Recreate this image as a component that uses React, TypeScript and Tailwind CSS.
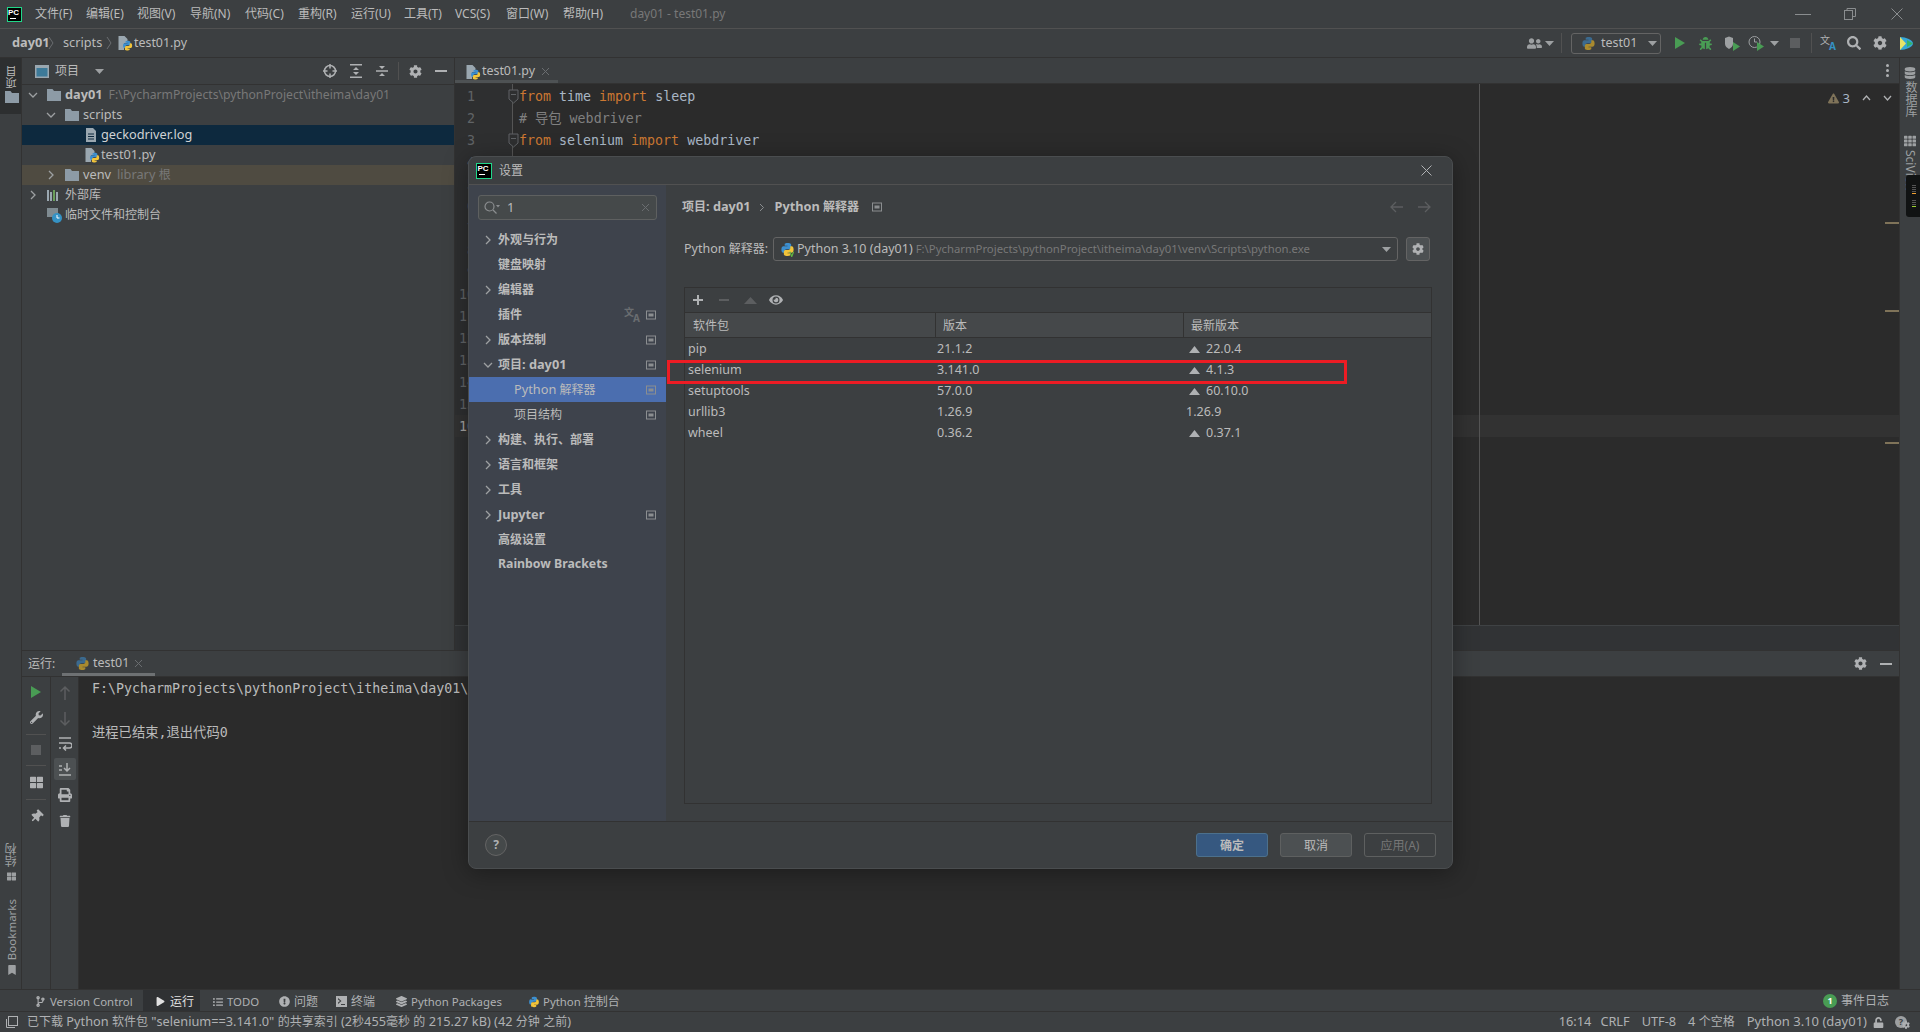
import React from 'react';
import { FaCog, FaWrench, FaPrint, FaTrash, FaThumbtack, FaEye, FaSearch, FaBug, FaDatabase, FaUnlock, FaBookmark, FaLayerGroup, FaExclamationCircle, FaCodeBranch, FaPlay, FaUserFriends, FaListUl, FaTh, FaThLarge, FaExclamationTriangle } from 'react-icons/fa';

const Mix = ({ s }: { s: string }) => (
  <>
    {s.split(/([\u4e00-\u9fff、]+)/).map((p, i) =>
      i % 2 === 1 ? <span key={i} className="text-[12px]">{p}</span> : <span key={i}>{p}</span>
    )}
  </>
);

const PcLogo = ({ small }: { small?: boolean }) => (
  <div className={`${small ? 'w-[15px] h-[15px]' : 'w-[16px] h-[16px]'} bg-black border border-[#21d789] flex flex-col items-center justify-start overflow-hidden shrink-0`}>
    <span className="text-[8px] leading-[9px] font-bold text-white font-['Liberation_Sans',sans-serif] -ml-[2px]">PC</span>
    <span className="block w-[6px] h-[1px] bg-white -ml-[4px] mt-[1px]" />
  </div>
);

const PY_PATH = 'M7.9 1C4.9 1 5 2.3 5 2.3V4h3v.5H3.8S1.5 4.3 1.5 7.9s2 3.5 2 3.5H5V9.6s-.1-2 2-2h3s1.9 0 1.9-1.8V2.9S12.2 1 7.9 1z';

const PyLogo = ({ size = 14, dim, venv }: { size?: number; dim?: boolean; venv?: boolean }) => (
  <svg width={size} height={size} viewBox="0 0 16 16" className="shrink-0">
    <path fill={dim ? '#3b6a8f' : '#3c8fd0'} d={PY_PATH} />
    <path fill={dim ? '#a98a2e' : '#f2c43a'} transform="rotate(180 8 8)" d={PY_PATH} />
    {venv && <path d="M10.500 10.500l2 5 2-5" fill="none" stroke="#62b543" strokeWidth="1.300" />}
  </svg>
);

const PyFile = () => (
  <svg width="16" height="16" viewBox="0 0 16 16" className="shrink-0">
    <path fill="#9aa7b0" d="M1.500 1h6l3 3v4H7v7H1.500z" />
    <g transform="translate(5 5) scale(.7)">
      <path fill="#3c8fd0" d={PY_PATH} />
      <path fill="#f2c43a" transform="rotate(180 8 8)" d={PY_PATH} />
    </g>
  </svg>
);

const Chevron = ({ open, className = '' }: { open?: boolean; className?: string }) => (
  <svg width="12" height="12" viewBox="0 0 12 12" className={`shrink-0 ${className}`} fill="none" stroke="#9da0a2" strokeWidth="1.300">
    {open ? <path d="M2 4l4 4 4-4" /> : <path d="M4 2l4 4-4 4" />}
  </svg>
);

const Folder = () => (
  <svg width="14" height="12" viewBox="0 0 14 12" className="shrink-0"><path fill="#8d9ba6" d="M0 0h5.500l1.500 2h7v10H0z" /></svg>
);

const Caret = ({ c = '#9da0a2' }: { c?: string }) => (
  <svg width="9" height="5" viewBox="0 0 9 5" className="shrink-0"><path d="M0 0h9L4.500 5z" fill={c} /></svg>
);

const Translate = ({ dim }: { dim?: boolean }) => (
  <span className={`relative block w-[16px] h-[16px] text-[10px] leading-[10px] ${dim ? 'text-[#6a6d70]' : 'text-[#afb1b3]'}`}>
    <span className="absolute left-0 top-0">文</span>
    <span className={`absolute right-0 bottom-0 font-bold ${dim ? 'text-[#6a6d70]' : 'text-[#3592c4]'}`}>A</span>
  </span>
);

const menus: [string, string][] = [['文件(F)', 'w-[51px]'], ['编辑(E)', 'w-[51px]'], ['视图(V)', 'w-[53px]'], ['导航(N)', 'w-[55px]'], ['代码(C)', 'w-[53px]'], ['重构(R)', 'w-[53px]'], ['运行(U)', 'w-[53px]'], ['工具(T)', 'w-[51px]'], ['VCS(S)', 'w-[51px]'], ['窗口(W)', 'w-[57px]'], ['帮助(H)', 'w-[67px]']];

function TitleBar() {
  return (
    <div className="h-[29px] shrink-0 flex items-center border-b border-[#515151] pl-[7px] text-[12px] text-[#bbbbbb]">
      <PcLogo small />
      <div className="w-[13px]" />
      {menus.map(([m, w]) => <span key={m} className={`${w} shrink-0`}>{m}</span>)}
      <span className="text-[#787878]">day01 - test01.py</span>
      <div className="flex-1" />
      <div className="w-[16px] h-[1px] bg-[#8a8d8f] mr-[33px]" />
      <svg width="12" height="12" viewBox="0 0 12 12" fill="none" stroke="#8a8d8f" className="mr-[35px]"><rect x=".5" y="2.500" width="8" height="9" /><path d="M3 2.500V.5h8.500v8H8.500" /></svg>
      <svg width="12" height="12" viewBox="0 0 12 12" fill="none" stroke="#8a8d8f" className="mr-[17px]"><path d="M.5.5l11 11M11.500.5l-11 11" /></svg>
    </div>
  );
}

function NavBar() {
  return (
    <div className="h-[29px] shrink-0 flex items-center border-b border-[#323232] pl-[12px] text-[12.750px] text-[#bbbbbb]">
      <span className="font-bold w-[36px]">day01</span>
      <svg width="6" height="14" viewBox="0 0 6 14" fill="none" stroke="#6a6d70" className="mr-[9px]"><path d="M1 1l4 6-4 6" /></svg>
      <span className="w-[43px]">scripts</span>
      <svg width="6" height="14" viewBox="0 0 6 14" fill="none" stroke="#6a6d70" className="mr-[5px]"><path d="M1 1l4 6-4 6" /></svg>
      <PyFile />
      <span className="ml-[1px] text-[12.400px]">test01.py</span>
      <div className="flex-1" />
      <FaUserFriends className="text-[#9da0a2] text-[15px] mr-[3px]" />
      <Caret />
      <div className="w-[1px] h-[20px] bg-[#515151] ml-[7px] mr-[9px]" />
      <div className="w-[90px] h-[21px] border border-[#646464] rounded-[3px] flex items-center pl-[9px] mr-[13px]">
        <PyLogo size={15} dim />
        <span className="ml-[5px] w-[47px] text-[12.500px]">test01</span>
        <Caret />
      </div>
      <svg width="12" height="14" viewBox="0 0 12 14" className="mr-[13px]"><path d="M1 1l10 6-10 6z" fill="#499c54" /></svg>
      <FaBug className="text-[#499c54] text-[13px] mr-[12px]" />
      <svg width="17" height="16" viewBox="0 0 17 16" className="mr-[7px]"><path d="M1 3l4-1.500L9 3v6c0 2-2 4-4 5-2-1-4-3-4-5z" fill="#9da0a2" /><path d="M9 7l7 4.500L9 16z" fill="#499c54" /></svg>
      <svg width="17" height="16" viewBox="0 0 17 16" fill="none" className="mr-[5px]"><circle cx="6.500" cy="7" r="5.500" stroke="#9da0a2" /><path d="M6.500 3.500V7H9" stroke="#9da0a2" /><path d="M9 7l7 4.500L9 16z" fill="#499c54" /></svg>
      <Caret />
      <div className="w-[10px] h-[10px] bg-[#5c5e60] ml-[11px] mr-[11px]" />
      <div className="w-[1px] h-[20px] bg-[#515151] mr-[8px]" />
      <Translate />
      <FaSearch className="text-[#afb1b3] text-[14px] ml-[11px]" />
      <FaCog className="text-[#afb1b3] text-[14px] ml-[12px]" />
      <svg width="15" height="15" viewBox="0 0 15 15" className="ml-[12px] mr-[6px]"><path d="M1 1c6 0 13 3 13 6.500S7 14 1 14z" fill="#35a8d8" /><path d="M1 1l6 6.500L1 14z" fill="#e8e36a" /><path d="M8 4l6 3.500-6 3.500z" fill="#35b36b" /></svg>
    </div>
  );
}

function LeftStripe() {
  return (
    <div className="w-[22px] shrink-0 flex flex-col border-r border-[#323232] text-[#bbbbbb]">
      <div className="h-[56px] bg-[#2d2f30] flex flex-col items-center pt-[8px] pl-[2px] gap-[3px]">
        <span className="[writing-mode:vertical-rl] rotate-180 text-[11px] leading-[12px]">项目</span>
        <Folder />
      </div>
      <div className="flex-1" />
      <div className="flex flex-col items-center gap-[5px] text-[#9da0a2] mb-[14px] pl-[2px]">
        <span className="[writing-mode:vertical-rl] rotate-180 text-[12px] leading-[12px]">结构</span>
        <FaThLarge className="text-[9px] mb-[13px]" />
        <span className="[writing-mode:vertical-rl] rotate-180 text-[11.500px] leading-[12px]">Bookmarks</span>
        <FaBookmark className="text-[10px]" />
      </div>
    </div>
  );
}

const Row = ({ indent, chev, open, icon, children, cls = '' }: { indent: string; chev?: boolean; open?: boolean; icon: React.ReactNode; children: React.ReactNode; cls?: string }) => (
  <div className={`h-[20px] flex items-center text-[12.750px] text-[#bbbbbb] ${indent} ${cls}`}>
    <span className="w-[20px] shrink-0 flex items-center">{chev && <Chevron open={open} />}</span>
    <span className="w-[18px] shrink-0 flex items-center">{icon}</span>
    {children}
  </div>
);

function ProjectPanel() {
  return (
    <div className="w-[433px] shrink-0 flex flex-col border-r border-[#323232]">
      <div className="h-[27px] shrink-0 flex items-center border-b border-[#323232] pl-[13px] text-[12px] text-[#bbbbbb]">
        <svg width="14" height="13" viewBox="0 0 14 13" className="shrink-0"><rect width="14" height="13" fill="#9aa7b0" /><rect x="1.500" y="3" width="11" height="8.500" fill="#3d7a99" /></svg>
        <span className="ml-[6px] w-[40px]">项目</span>
        <Caret />
        <div className="flex-1" />
        <svg width="14" height="14" viewBox="0 0 14 14" fill="none" stroke="#afb1b3" strokeWidth="1.500" className="mr-[12px]"><circle cx="7" cy="7" r="5.500" /><path d="M7 0v4.500M7 9.500V14M0 7h4.500M9.500 7H14" /></svg>
        <svg width="14" height="14" viewBox="0 0 14 14" fill="#afb1b3" className="mr-[12px]"><path d="M1 0h12v1.500H1zM1 12.500h12V14H1zM7 3l3 3H4zM7 11L4 8h6z" /></svg>
        <svg width="14" height="14" viewBox="0 0 14 14" fill="#afb1b3" className="mr-[9px]"><path d="M1 6.250h12v1.500H1zM7 5L4 2h6zM7 9l3 3H4z" /></svg>
        <div className="w-[1px] h-[18px] bg-[#515151] mr-[10px]" />
        <FaCog className="text-[#afb1b3] text-[13px] mr-[13px]" />
        <div className="w-[12px] h-[2px] bg-[#afb1b3] mr-[7px]" />
      </div>
      <div className="flex flex-col">
        <Row indent="pl-[5px]" chev open icon={<Folder />}><span className="font-bold">day01</span><span className="ml-[6px] text-[#787878] text-[12.200px]">F:\PycharmProjects\pythonProject\itheima\day01</span></Row>
        <Row indent="pl-[23px]" chev open icon={<Folder />}>scripts</Row>
        <Row indent="pl-[41px]" cls="bg-[#0d293e]" icon={<svg width="12" height="14" viewBox="0 0 12 14" className="ml-[2px]"><path fill="#9aa7b0" d="M1 0h7l3 3v11H1z" /><path stroke="#0d293e" d="M3 6h6M3 8.500h6M3 11h6" /></svg>}><span className="text-[#d0d2d4]">geckodriver.log</span></Row>
        <Row indent="pl-[41px]" icon={<span className="ml-[1px] flex"><PyFile /></span>}>test01.py</Row>
        <Row indent="pl-[23px]" cls="bg-[#4f4b41]" chev icon={<Folder />}>venv<span className="ml-[6px] text-[#787878]"><Mix s="library 根" /></span></Row>
        <Row indent="pl-[5px]" chev icon={<svg width="13" height="13" viewBox="0 0 13 13"><path fill="#9aa7b0" d="M0 1h2v11H0zM3 3h2v9H3z" /><path fill="#6a9e5b" d="M6 1h2v11H6z" /><path fill="#9aa7b0" d="M9 3h2v9H9z" /></svg>}><Mix s="外部库" /></Row>
        <Row indent="pl-[5px]" icon={<svg width="15" height="15" viewBox="0 0 15 15"><rect x="0" y="0" width="11" height="9" fill="#7f8b91" /><circle cx="10" cy="10" r="5" fill="#3592c4" /><path d="M10 7v3h2.500" stroke="#fff" fill="none" /></svg>}><Mix s="临时文件和控制台" /></Row>
      </div>
    </div>
  );
}

const Fold = ({ top }: { top: string }) => (
  <svg width="11" height="15" viewBox="0 0 11 15" fill="#2e2f30" stroke="#606366" className={`absolute left-[53px] ${top}`}><path d="M1 1h9v9l-4.500 4L1 10zM3 5.500h5" /></svg>
);

function Editor() {
  const nums = [1, 2, 3, 4, 5, 6, 7, 8, 9, 10, 11, 12, 13, 14, 15, 16];
  const K = ({ children }: { children: React.ReactNode }) => <span className="text-[#cc7832]">{children}</span>;
  return (
    <div className="flex-1 min-w-0 flex flex-col">
      <div className="h-[26px] shrink-0 flex items-stretch border-b border-[#323232] text-[12.400px] text-[#bbbbbb]">
        <div className="w-[103px] flex items-center pl-[10px] border-b-[3px] border-[#4e5254] pt-[5px]">
          <PyFile />
          <span className="ml-[1px]">test01.py</span>
          <svg width="9" height="9" viewBox="0 0 9 9" stroke="#6a6d70" className="ml-[6px]"><path d="M1 1l7 7M8 1l-7 7" /></svg>
        </div>
        <div className="flex-1" />
        <div className="flex flex-col gap-[2px] justify-center mr-[10px]">
          <i className="block w-[3px] h-[3px] rounded-full bg-[#afb1b3]" />
          <i className="block w-[3px] h-[3px] rounded-full bg-[#afb1b3]" />
          <i className="block w-[3px] h-[3px] rounded-full bg-[#afb1b3]" />
        </div>
      </div>
      <div className="flex-1 min-h-0 flex bg-[#2b2b2b] font-['DejaVu_Sans_Mono','Noto_Sans_CJK_SC',monospace] text-[13.300px] leading-[22px] relative overflow-hidden">
        <div className="w-[58px] shrink-0 bg-[#2e2f30] border-r border-[#555555] pt-[2px]">
          {nums.map((n) => <div key={n} className={`h-[22px] w-[20px] text-right ${n === 16 ? 'text-[#a4a3a3]' : 'text-[#606366]'}`}>{n}</div>)}
        </div>
        <div className="flex-1 pt-[2px] pl-[6px] text-[#a9b7c6]">
          <div className="h-[22px]"><K>from</K> time <K>import</K> sleep</div>
          <div className="h-[22px] text-[#808080]"># 导包 webdriver</div>
          <div className="h-[22px]"><K>from</K> selenium <K>import</K> webdriver</div>
        </div>
        <Fold top="top-[5px]" />
        <Fold top="top-[49px]" />
        <div className="absolute left-0 right-0 top-[331px] h-[22px] bg-[#323232]" />
        <div className="absolute left-0 top-[332px] w-[20px] h-[22px] text-right text-[#a4a3a3]">16</div>
        <div className="absolute left-[1024px] top-0 bottom-0 w-[1px] bg-[#555555]" />
        <div className="absolute right-0 top-[138px] w-[14px] h-[2px] bg-[#7f7359]" />
        <div className="absolute right-0 top-[226px] w-[14px] h-[2px] bg-[#7f7359]" />
        <div className="absolute right-0 top-[358px] w-[14px] h-[2px] bg-[#7f7359]" />
        <div className="absolute right-[7px] top-[3px] flex items-center font-['Noto_Sans',sans-serif] text-[13px] text-[#a9b7c6]">
          <FaExclamationTriangle className="text-[#7f7359] text-[11px] mr-[4px]" />
          <span className="mr-[12px]">3</span>
          <svg width="9" height="6" viewBox="0 0 9 6" fill="none" stroke="#afb1b3" strokeWidth="1.300" className="mr-[12px]"><path d="M1 5l3.500-4L8 5" /></svg>
          <svg width="9" height="6" viewBox="0 0 9 6" fill="none" stroke="#afb1b3" strokeWidth="1.300"><path d="M1 1l3.500 4L8 1" /></svg>
        </div>
      </div>
      <div className="h-[25px] shrink-0 bg-[#313335] border-t border-[#3f4244]" />
    </div>
  );
}

function RunPanel() {
  const c = 'text-[#afb1b3]';
  const Sep = () => <div className="w-[20px] h-[1px] bg-[#515151]" />;
  return (
    <div className="h-[339px] shrink-0 flex flex-col border-t border-[#323232]">
      <div className="h-[26px] shrink-0 flex items-stretch border-b border-[#323232] text-[12.500px] text-[#bbbbbb]">
        <span className="ml-[6px] w-[34px] self-center text-[12px]">运行:</span>
        <div className="w-[93px] flex items-center pl-[13px] border-b-[3px] border-[#6e7173] pt-[2px]">
          <PyLogo size={15} dim />
          <span className="ml-[3px]">test01</span>
          <svg width="9" height="9" viewBox="0 0 9 9" stroke="#6a6d70" className="ml-[5px]"><path d="M1 1l7 7M8 1l-7 7" /></svg>
        </div>
        <div className="flex-1" />
        <FaCog className="text-[#afb1b3] text-[13px] self-center mr-[13px]" />
        <div className="w-[12px] h-[2px] bg-[#afb1b3] self-center mr-[7px]" />
      </div>
      <div className="flex-1 min-h-0 flex">
        <div className={`w-[29px] shrink-0 border-r border-[#323232] flex flex-col items-center pt-[8px] gap-[10px] ${c}`}>
          <svg width="12" height="14" viewBox="0 0 12 14"><path d="M1 1l10 6-10 6z" fill="#499c54" /></svg>
          <FaWrench className="text-[13px] mt-[2px]" />
          <Sep />
          <div className="w-[10px] h-[10px] bg-[#5c5e60]" />
          <Sep />
          <FaThLarge className="text-[13px]" />
          <Sep />
          <FaThumbtack className="text-[13px] rotate-45" />
        </div>
        <div className={`w-[28px] shrink-0 flex flex-col items-center pt-[8px] gap-[10px] border-r border-[#323232] ${c}`}>
          <svg width="12" height="16" viewBox="0 0 12 16" fill="none" stroke="#5c5e60" strokeWidth="1.500"><path d="M6 15V2M1.500 6.500L6 2l4.500 4.500" /></svg>
          <svg width="12" height="16" viewBox="0 0 12 16" fill="none" stroke="#5c5e60" strokeWidth="1.500"><path d="M6 1v13M1.500 9.500L6 14l4.500-4.500" /></svg>
          <svg width="14" height="14" viewBox="0 0 14 14" fill="none" stroke="#afb1b3" strokeWidth="1.500"><path d="M1 1h12M1 6h10.500a2.200 2.200 0 010 5H6M1 11h2M8 8.500L5.500 11 8 13.500" /></svg>
          <div className="w-[22px] h-[22px] -my-[3px] bg-[#4c5052] rounded-[2px] flex items-center justify-center">
            <svg width="14" height="14" viewBox="0 0 14 14" fill="none" stroke="#afb1b3" strokeWidth="1.500"><path d="M1 13h12M1 4h3M1 8h3M9 1v8M6 6l3 3 3-3" /></svg>
          </div>
          <FaPrint className="text-[14px] mt-[1px]" />
          <FaTrash className="text-[12px] mt-[3px]" />
        </div>
        <div className="flex-1 bg-[#2b2b2b] pl-[13px] pt-[1px] font-['DejaVu_Sans_Mono','Noto_Sans_CJK_SC',monospace] text-[13.300px] leading-[22px] text-[#bbbbbb] whitespace-pre">
          <div>F:\PycharmProjects\pythonProject\itheima\day01\venv\Scripts\python.exe</div>
          <div className="h-[22px]" />
          <div>进程已结束,退出代码0</div>
        </div>
      </div>
    </div>
  );
}

function RightStripe() {
  return (
    <div className="w-[21px] shrink-0 border-l border-[#323232] flex flex-col items-center pt-[9px] text-[#9da0a2] relative">
      <FaDatabase className="text-[12px]" />
      <span className="[writing-mode:vertical-rl] text-[12px] leading-[12px] mt-[2px]">数据库</span>
      <FaTh className="text-[12px] mt-[18px]" />
      <span className="[writing-mode:vertical-rl] text-[12px] leading-[12px] mt-[3px]">SciView</span>
      <div className="absolute right-0 top-[117px] w-[14px] h-[42px] bg-[#111313] rounded-l-[3px] flex flex-col items-center justify-center gap-[1px] pl-[1px]">
        <span className="w-[4px] h-[1px] bg-[#555]" /><span className="w-[4px] h-[1px] bg-[#555]" /><span className="w-[4px] h-[1px] bg-[#555]" /><span className="w-[4px] h-[1px] bg-[#555]" />
        <span className="w-[4px] h-[1px] bg-[#f0a030] mb-[5px]" />
        <span className="w-[4px] h-[1px] bg-[#555]" /><span className="w-[4px] h-[1px] bg-[#555]" /><span className="w-[4px] h-[1px] bg-[#555]" />
        <span className="w-[4px] h-[1px] bg-[#9ad030]" />
      </div>
    </div>
  );
}

const bottomTabs = [
  { ic: <FaCodeBranch className="text-[11px]" />, t: 'Version Control', w: 'w-[143px] pl-[35px]' },
  { ic: <FaPlay className="text-[9px]" />, t: '运行', w: 'w-[57px] pl-[12px] bg-[#2f3133] text-[#e0e0e0]' },
  { ic: <FaListUl className="text-[10px]" />, t: 'TODO', w: 'w-[67px] pl-[12px]' },
  { ic: <FaExclamationCircle className="text-[11px]" />, t: '问题', w: 'w-[57px] pl-[12px]' },
  { ic: <svg width="11" height="11" viewBox="0 0 11 11"><path fill="#afb1b3" fillRule="evenodd" d="M0 0h11v11H0zM2 2v1.500L4 5 2 6.500V8l3.500-3zM5 8v1h4V8z" /></svg>, t: '终端', w: 'w-[60px] pl-[12px]' },
  { ic: <FaLayerGroup className="text-[11px]" />, t: 'Python Packages', w: 'w-[132px] pl-[12px]' },
  { ic: <PyLogo size={12} />, t: 'Python 控制台', w: 'pl-[12px]' },
];

function BottomBar() {
  return (
    <>
      <div className="h-[22px] shrink-0 flex items-stretch border-t border-[#323232] text-[11.400px] text-[#afb1b3]">
        {bottomTabs.map((b) => (
          <div key={b.t} className={`flex items-center pt-[2px] gap-[4px] shrink-0 whitespace-nowrap ${b.w}`}>
            <span className="w-[11px] flex justify-center">{b.ic}</span><span><Mix s={b.t} /></span>
          </div>
        ))}
        <div className="flex-1" />
        <div className="flex items-center pt-[1px] gap-[4px] mr-[31px] text-[12px]">
          <span className="w-[14px] h-[14px] rounded-full bg-[#499c54] text-white text-[9px] font-bold flex items-center justify-center">1</span>
          <span>事件日志</span>
        </div>
      </div>
      <div className="h-[21px] shrink-0 flex items-center border-t border-[#323232] text-[12.750px] text-[#afb1b3] pl-[6px] whitespace-nowrap">
        <svg width="12" height="12" viewBox="0 0 12 12" fill="none" stroke="#afb1b3"><rect x="2.500" y=".5" width="9" height="9" /><path d="M.5 3v8.500H9" /></svg>
        <span className="ml-[9px]"><Mix s={'已下载 Python 软件包 "selenium==3.141.0" 的共享索引 (2秒455毫秒 的 215.27 kB) (42 分钟 之前)'} /></span>
        <div className="flex-1" />
        <span className="mr-[9px]">16:14</span>
        <span className="mr-[12px]">CRLF</span>
        <span className="mr-[12px]">UTF-8</span>
        <span className="mr-[12px]"><Mix s="4 个空格" /></span>
        <span className="mr-[6px] text-[13px]"><Mix s="Python 3.10 (day01)" /></span>
        <FaUnlock className="text-[11px] mr-[11px]" />
        <span className="relative block w-[15px] h-[13px] mr-[10px]">
          <span className="absolute left-0 top-0 w-[12px] h-[12px] rounded-full bg-[#9da0a2] text-[#3c3f41] text-[9px] leading-[12px] text-center font-bold">?</span>
          <FaCog className="absolute right-0 bottom-0 text-[8px] text-[#afb1b3]" />
        </span>
      </div>
    </>
  );
}

const Badge = () => (
  <svg width="10" height="10" viewBox="0 0 10 10" className="shrink-0"><rect x=".5" y="1" width="9" height="8" fill="none" stroke="#8b8e90" /><rect x="2.500" y="3.500" width="5" height="3" fill="#8b8e90" /></svg>
);

const side = [
  { t: '外观与行为', c: true },
  { t: '键盘映射' },
  { t: '编辑器', c: true },
  { t: '插件', b: true, tr: true },
  { t: '版本控制', c: true, b: true },
  { t: '项目: day01', c: true, o: true, b: true },
  { t: 'Python 解释器', sub: true, b: true, sel: true },
  { t: '项目结构', sub: true, b: true },
  { t: '构建、执行、部署', c: true },
  { t: '语言和框架', c: true },
  { t: '工具', c: true },
  { t: 'Jupyter', c: true, b: true },
  { t: '高级设置' },
  { t: 'Rainbow Brackets', small: true },
];

function Sidebar() {
  return (
    <div className="w-[197px] shrink-0 bg-[#3e434c] pt-[10px] flex flex-col">
      <div className="mx-[9px] h-[25px] rounded-[3px] border border-[#5e6060] bg-[#45494a] flex items-center pl-[5px] pr-[6px] text-[13px] text-[#bbbbbb]">
        <svg width="16" height="14" viewBox="0 0 16 14" fill="none" stroke="#8b8e90" strokeWidth="1.200"><circle cx="5.500" cy="5.500" r="4.500" /><path d="M9 9l3.500 3.500" /><path d="M12 4h4l-2 2.500z" fill="#8b8e90" stroke="none" /></svg>
        <span className="ml-[7px] flex-1">1</span>
        <svg width="9" height="9" viewBox="0 0 9 9" stroke="#6a6d70"><path d="M1 1l7 7M8 1l-7 7" /></svg>
      </div>
      <div className="mt-[7px] flex flex-col">
        {side.map((s) => (
          <div key={s.t} className={`h-[25px] flex items-center ${s.small ? 'text-[12.300px]' : 'text-[12.750px]'} text-[#bbbbbb] ${s.sel ? 'bg-[#4b6eaf]' : ''} ${s.sub ? 'pl-[45px]' : 'pl-[13px] font-bold'}`}>
            {!s.sub && <span className="w-[16px] shrink-0 flex items-center">{s.c && <Chevron open={s.o} />}</span>}
            <span className="flex-1 whitespace-nowrap"><Mix s={s.t} /></span>
            {s.tr && <span className="mr-[6px]"><Translate dim /></span>}
            {s.b && <span className="mr-[10px] flex"><Badge /></span>}
          </div>
        ))}
      </div>
    </div>
  );
}

const pkgs = [
  ['pip', '21.1.2', '22.0.4', true],
  ['selenium', '3.141.0', '4.1.3', true],
  ['setuptools', '57.0.0', '60.10.0', true],
  ['urllib3', '1.26.9', '1.26.9', false],
  ['wheel', '0.36.2', '0.37.1', true],
] as const;

function Content() {
  return (
    <div className="flex-1 min-w-0 flex flex-col pl-[18px] pr-[20px] pt-[11px]">
      <div className="h-[22px] flex items-center -ml-[2px] text-[12.750px] text-[#bbbbbb] font-bold">
        <span><Mix s="项目: day01" /></span>
        <svg width="6" height="9" viewBox="0 0 6 9" fill="none" stroke="#8b8e90" className="mx-[9px]"><path d="M1 1l3.500 3.500L1 8" /></svg>
        <span><Mix s="Python 解释器" /></span>
        <span className="ml-[13px] flex"><Badge /></span>
      </div>
      <div className="absolute right-[21px] top-[16px] flex items-center gap-[13px]">
        <svg width="14" height="12" viewBox="0 0 14 12" fill="none" stroke="#5c5e60" strokeWidth="1.300"><path d="M13 6H1M6 1L1 6l5 5" /></svg>
        <svg width="14" height="12" viewBox="0 0 14 12" fill="none" stroke="#5c5e60" strokeWidth="1.300"><path d="M1 6h12M8 1l5 5-5 5" /></svg>
      </div>
      <div className="h-[24px] mt-[19px] flex items-center text-[12.500px] text-[#bbbbbb]">
        <span className="w-[89px] shrink-0"><Mix s="Python 解释器:" /></span>
        <div className="w-[625px] h-[24px] border border-[#646464] rounded-[3px] flex items-center pl-[6px] pr-[6px] bg-[#3c3f41]">
          <PyLogo size={15} venv />
          <span className="ml-[2px] whitespace-nowrap">Python 3.10 (day01)</span>
          <span className="ml-[3px] text-[#787878] text-[11.350px] whitespace-nowrap">F:\PycharmProjects\pythonProject\itheima\day01\venv\Scripts\python.exe</span>
          <div className="flex-1" />
          <Caret />
        </div>
        <div className="w-[24px] h-[24px] ml-[8px] border border-[#646464] rounded-[3px] bg-[#4c5052] flex items-center justify-center"><FaCog className="text-[#afb1b3] text-[12px]" /></div>
      </div>
      <div className="mt-[26px] h-[517px] border border-[#323232] flex flex-col">
        <div className="h-[25px] shrink-0 flex items-center border-b border-[#323232]">
          <span className="w-[26px] flex justify-center"><svg width="12" height="12" viewBox="0 0 12 12" fill="#afb1b3"><path d="M5 1h2v4h4v2H7v4H5V7H1V5h4z" /></svg></span>
          <span className="w-[26px] flex justify-center"><i className="block w-[10px] h-[2px] bg-[#5c5e60]" /></span>
          <span className="w-[26px] flex justify-center"><svg width="13" height="7" viewBox="0 0 13 7"><path d="M6.500 0L13 7H0z" fill="#5c5e60" /></svg></span>
          <span className="w-[26px] flex justify-center"><FaEye className="text-[#afb1b3] text-[14px]" /></span>
        </div>
        <div className="h-[25px] shrink-0 grid grid-cols-[251px_248px_1fr] bg-[#45484a] border-b border-[#323232] text-[12px] text-[#bbbbbb]">
          <span className="flex items-center pl-[8px] pt-[1px] border-r border-[#323232]">软件包</span>
          <span className="flex items-center pl-[7px] pt-[1px] border-r border-[#323232]">版本</span>
          <span className="flex items-center pl-[7px] pt-[1px]">最新版本</span>
        </div>
        <div className="pt-[1px]">
          {pkgs.map(([n, v, l, up]) => (
            <div key={n} className="h-[21px] grid grid-cols-[251px_248px_1fr] items-center text-[12.500px] text-[#bbbbbb]">
              <span className="pl-[3px]">{n}</span>
              <span className="pl-[1px]">{v}</span>
              <span className={`flex items-center ${up ? 'pl-[5px]' : 'pl-[2px]'}`}>
                {up && <svg width="11" height="7" viewBox="0 0 11 7" className="mr-[6px]"><path d="M5.500 0L11 7H0z" fill="#afb1b3" /></svg>}
                {l}
              </span>
            </div>
          ))}
        </div>
      </div>
    </div>
  );
}

function Dialog() {
  return (
    <div className="absolute left-[468px] top-[156px] w-[985px] h-[713px] rounded-[8px] bg-[#3c3f41] border border-[#4a4d4f] shadow-[0_4px_24px_rgba(0,0,0,0.35)] flex flex-col overflow-hidden font-['Noto_Sans','Noto_Sans_CJK_SC',sans-serif]">
      <div className="h-[28px] shrink-0 flex items-center border-b border-[#515151] pl-[7px] text-[12px] text-[#bbbbbb]">
        <PcLogo />
        <span className="ml-[7px] flex-1">设置</span>
        <svg width="11" height="11" viewBox="0 0 11 11" stroke="#afb1b3" className="mr-[20px]"><path d="M.5.5l10 10M10.500.5l-10 10" /></svg>
      </div>
      <div className="flex-1 min-h-0 flex relative">
        <Sidebar />
        <Content />
        <div className="absolute left-[198px] top-[175px] w-[680px] h-[24px] border-[3px] border-[#ed1c24]" />
      </div>
      <div className="h-[47px] shrink-0 border-t border-[#323232] flex items-center pl-[16px] pr-[16px] text-[12px]">
        <div className="w-[22px] h-[22px] rounded-full border border-[#646464] bg-[#45494a] flex items-center justify-center text-[#afb1b3] font-bold text-[12px]">?</div>
        <div className="flex-1" />
        <div className="flex gap-[12px]">
          <div className="w-[72px] h-[24px] rounded-[3px] bg-[#365880] border border-[#4c708c] text-[#bbbbbb] font-bold flex items-center justify-center pt-[1px]">确定</div>
          <div className="w-[72px] h-[24px] rounded-[3px] bg-[#4c5052] border border-[#5e6060] text-[#bbbbbb] flex items-center justify-center pt-[1px]">取消</div>
          <div className="w-[72px] h-[24px] rounded-[3px] border border-[#5e6060] text-[#777777] flex items-center justify-center pt-[1px]">应用(A)</div>
        </div>
      </div>
    </div>
  );
}

export default function App() {
  return (
    <div className="relative w-[1920px] h-[1032px] overflow-hidden bg-[#3c3f41] flex flex-col font-['Noto_Sans','Noto_Sans_CJK_SC',sans-serif]">
      <TitleBar />
      <NavBar />
      <div className="flex-1 min-h-0 flex">
        <LeftStripe />
        <div className="flex-1 min-w-0 flex flex-col">
          <div className="flex-1 min-h-0 flex">
            <ProjectPanel />
            <Editor />
          </div>
          <RunPanel />
        </div>
        <RightStripe />
      </div>
      <BottomBar />
      <Dialog />
    </div>
  );
}
